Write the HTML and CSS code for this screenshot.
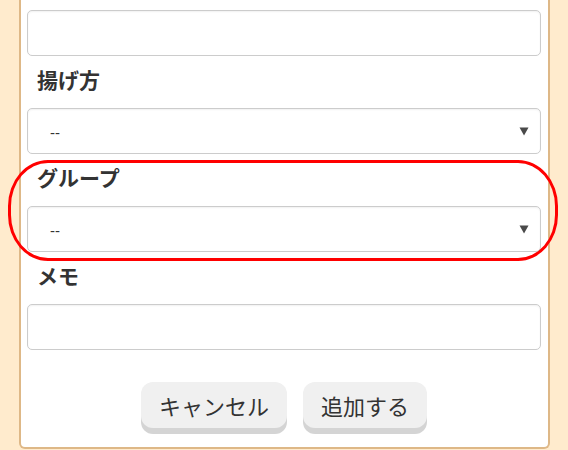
FILE: index.html
```html
<!DOCTYPE html>
<html lang="ja">
<head>
<meta charset="utf-8">
<link rel="stylesheet" href="styles.css">
</head>
<body>
<div class="card">
  <div class="field field-first">
    <div class="input"></div>
  </div>
  <div class="field">
    <div class="label">揚げ方</div>
    <div class="input select"><span class="value">--</span><svg class="arrow" width="10" height="9" viewBox="0 0 10 9"><path d="M0.5 0.5 H9.5 L5 8.5 Z" fill="#4a4a4a"/></svg></div>
  </div>
  <div class="field field-highlight">
    <div class="label">グループ</div>
    <div class="input select"><span class="value">--</span><svg class="arrow" width="10" height="9" viewBox="0 0 10 9"><path d="M0.5 0.5 H9.5 L5 8.5 Z" fill="#4a4a4a"/></svg></div>
    <div class="ring"></div>
  </div>
  <div class="field">
    <div class="label">メモ</div>
    <div class="input"></div>
  </div>
  <div class="actions">
    <button class="btn">キャンセル</button>
    <button class="btn">追加する</button>
  </div>
</div>
</body>
</html>
```
FILE: styles.css
```css
html, body {
  margin: 0;
  padding: 0;
  background: #ffebcd;
  font-family: "Noto Sans CJK JP", "Noto Sans", sans-serif;
  color: #333;
}

.card {
  box-sizing: border-box;
  width: 531px;
  margin-left: 19px;
  background: #fff;
  border: 2px solid #deb887;
  border-top: none;
  border-radius: 0 0 6px 6px;
  padding: 10px 7px 19px 6px;
}

.field {
  display: flex;
  flex-direction: column;
}

.field-highlight {
  position: relative;
}

.label {
  margin: 11px 0 17px;
  padding-left: 10px;
  font-size: 21px;
  line-height: 24px;
  font-weight: bold;
  color: #333;
}

.input {
  box-sizing: border-box;
  height: 46px;
  border: 1px solid #cccccc;
  border-radius: 5px;
  background: #fff;
  box-shadow: inset 0 1px 2px rgba(0, 0, 0, 0.06);
}

.select {
  display: flex;
  align-items: center;
  justify-content: space-between;
  padding: 0 11px 0 22px;
}

.value {
  font-family: "Liberation Sans", sans-serif;
  font-size: 15px;
  color: #333;
  position: relative;
  top: 1px;
}

.arrow {
  display: block;
}

.ring {
  position: absolute;
  left: -19px;
  top: 6px;
  width: 550px;
  height: 101px;
  box-sizing: border-box;
  border: 3px solid #ff0000;
  border-radius: 40px / 46px;
  pointer-events: none;
}

.actions {
  display: flex;
  justify-content: center;
  gap: 16px;
  margin-top: 32px;
}

.btn {
  height: 46px;
  padding: 0 18px;
  border: none;
  border-radius: 12px;
  background: #f0f0f0;
  box-shadow: 0 6px 0 #d4d4d4;
  font-family: "Noto Sans CJK JP", sans-serif;
  font-size: 22px;
  color: #333;
  line-height: 46px;
}
```
